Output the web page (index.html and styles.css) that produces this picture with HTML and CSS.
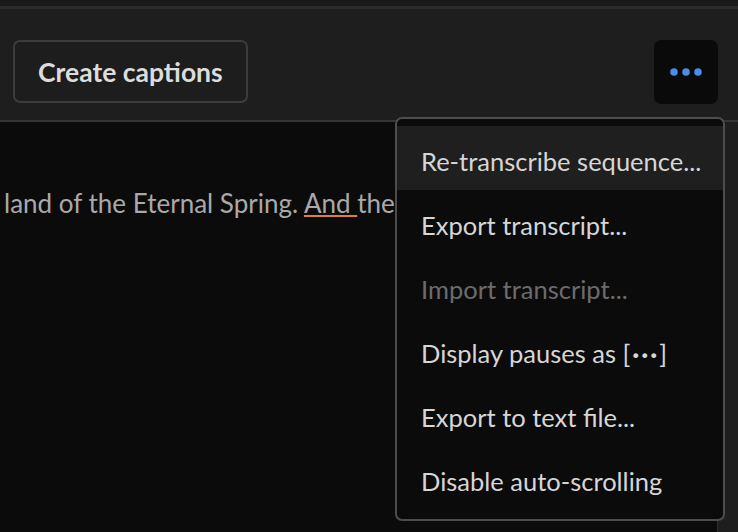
FILE: index.html
```html
<!DOCTYPE html>
<html lang="en">
<head>
<meta charset="utf-8">
<title>Transcript</title>
<link rel="stylesheet" href="styles.css">
</head>
<body>
<div class="app">
  <div class="topbar"></div>
  <header class="toolbar">
    <button class="btn-captions">Create captions</button>
    <button class="btn-more" aria-label="More">
      <svg width="32" height="10" viewBox="0 0 32 10">
        <circle cx="4" cy="5" r="3.8" fill="#4a8cea"/>
        <circle cx="16" cy="5" r="3.8" fill="#4a8cea"/>
        <circle cx="28" cy="5" r="3.8" fill="#4a8cea"/>
      </svg>
    </button>
  </header>
  <main class="content">
    <div class="transcript">
      <p class="line">land of the Eternal Spring. <span class="flag">And </span>the</p>
    </div>
    <div class="scroll"></div>
  </main>
  <ul class="menu">
    <li class="item active">Re-transcribe sequence...</li>
    <li class="item">Export transcript...</li>
    <li class="item disabled">Import transcript...</li>
    <li class="item">Display pauses as [<span class="dots">···</span>]</li>
    <li class="item">Export to text file...</li>
    <li class="item">Disable auto-scrolling</li>
  </ul>
</div>
</body>
</html>
```
FILE: styles.css
```css
* { box-sizing: border-box; }
html, body {
  margin: 0;
  padding: 0;
  background: #1e1e1e;
  font-family: "Lato", "Open Sans", sans-serif;
}
.app {
  position: relative;
  width: 738px;
  height: 532px;
  overflow: hidden;
  display: flex;
  flex-direction: column;
}
.topbar {
  height: 9px;
  background: #1a1a1a;
  border-bottom: 3px solid #2b2b2b;
  flex: none;
}
.toolbar {
  height: 113px;
  flex: none;
  display: flex;
  justify-content: space-between;
  align-items: flex-start;
  padding: 31px 20px 0 13px;
  background: #1e1e1e;
  border-bottom: 2px solid #363636;
}
.btn-captions {
  height: 63px;
  width: 235px;
  padding: 0 0 0 23px;
  text-align: left;
  background: #1d1d1d;
  border: 2px solid #3c3c3c;
  border-radius: 7px;
  color: #dcdcdc;
  font-family: "Lato", "Open Sans", sans-serif;
  font-weight: 700;
  font-size: 26.5px;
}
.btn-more {
  width: 64px;
  height: 64px;
  padding: 0;
  border: none;
  border-radius: 7px;
  background: #0a0a0a;
  display: flex;
  align-items: center;
  justify-content: center;
}
.btn-more svg { display: block; margin-top: -1px; }
.content {
  flex: 1;
  display: flex;
  min-height: 0;
}
.transcript {
  flex: 1;
  background: #0b0b0b;
  border-right: 1px solid #2e2e2e;
  padding: 63px 0 0 4px;
  overflow: hidden;
}
.line {
  margin: 0;
  white-space: nowrap;
  font-size: 26px;
  line-height: 36px;
  color: #a9a9a9;
}
.flag {
  text-decoration: underline;
  text-decoration-color: #e0822c;
  text-decoration-thickness: 2px;
  text-underline-offset: 2px;
}
.scroll {
  width: 20px;
  flex: none;
  background: #1e1e1e;
}
.menu {
  position: absolute;
  left: 395px;
  top: 117px;
  width: 330px;
  height: 404px;
  margin: 0;
  padding: 7px 0 0;
  list-style: none;
  background: #0b0b0b;
  border: 2px solid #4d4d4d;
  border-radius: 7px;
  overflow: hidden;
}
.item {
  height: 64px;
  padding: 6px 0 0 24px;
  line-height: 58px;
  font-size: 25.5px;
  color: #d6d6d6;
  white-space: nowrap;
}
.item.active { background: #1f1f1f; }
.item.disabled { color: #6b6b6b; }
.dots {
  font-weight: 700;
  letter-spacing: 2px;
  padding-left: 2px;
}
```
